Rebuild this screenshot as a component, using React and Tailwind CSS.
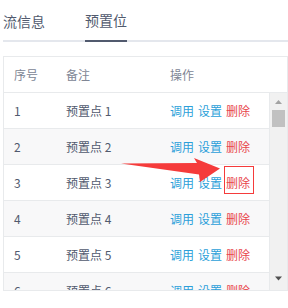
const rows = [1, 2, 3, 4, 5, 6];

const font = { fontFamily: '"Noto Sans CJK SC", "Noto Sans", sans-serif' };

export default function App() {
  return (
    <div className="relative w-[288px] h-[308px] bg-white overflow-hidden" style={font}>
      {/* tabs */}
      <div className="ml-[3px] flex gap-[40px] border-b-2 border-[#e4e7ed] h-[42px]">
        <div className="h-[40px] flex items-center pt-[3px] text-[14px] text-[#515a6e]">流信息</div>
        <div className="h-[42px] flex items-center pt-[1px] text-[14px] text-[#515a6e] border-b-2 border-[#515a6e]">
          预置位
        </div>
      </div>

      {/* table */}
      <div className="ml-[3px] mt-[14px] w-[285px] border border-[#e8eaec] text-[12px]">
        <div className="flex h-[36px] items-center border-b border-[#e8eaec] text-[#808695]">
          <div className="w-[62px] pl-[10px]">序号</div>
          <div className="w-[104px]">备注</div>
          <div>操作</div>
        </div>
        <div className="flex h-[197px]">
          <div className="w-[266px] overflow-hidden border-r border-[#e8eaec]">
            {rows.map((n) => (
              <div
                key={n}
                className={`flex h-[36px] shrink-0 items-center border-b border-[#e8eaec] text-[#515a6e] ${
                  n % 2 === 0 ? "bg-[#f8f8f9]" : "bg-white"
                }`}
              >
                <div className="w-[62px] pl-[10px]">{n}</div>
                <div className="w-[104px]">预置点 {n}</div>
                <div className="flex gap-[4px]">
                  <span className="text-[#2b9fd9]">调用</span>
                  <span className="text-[#2b9fd9]">设置</span>
                  <span className="text-[#e8464b]">删除</span>
                </div>
              </div>
            ))}
          </div>
          {/* scrollbar */}
          <div className="w-[17px] bg-[#f1f1f1] flex flex-col items-center">
            <svg width="17" height="17" viewBox="0 0 17 17" className="shrink-0">
              <path d="M5 11 L8.5 7 L12 11 Z" fill="#a3a3a3" />
            </svg>
            <div className="w-[13px] h-[17px] bg-[#c1c1c1]" />
            <div className="flex-1" />
            <svg width="17" height="17" viewBox="0 0 17 17" className="shrink-0 mb-[3px]">
              <path d="M5 6.5 L12 6.5 L8.5 10.5 Z" fill="#505050" />
            </svg>
          </div>
        </div>
      </div>

      {/* annotation */}
      <svg className="absolute left-0 top-0 pointer-events-none" width="288" height="308">
        <polygon
          points="121,163.5 197,163 194,158 220,168.5 200,182 199,174.5"
          fill="#f53b3b"
        />
        <rect x="224.5" y="166.5" width="29" height="27" fill="none" stroke="#f53b3b" strokeWidth="1" />
      </svg>
    </div>
  );
}
